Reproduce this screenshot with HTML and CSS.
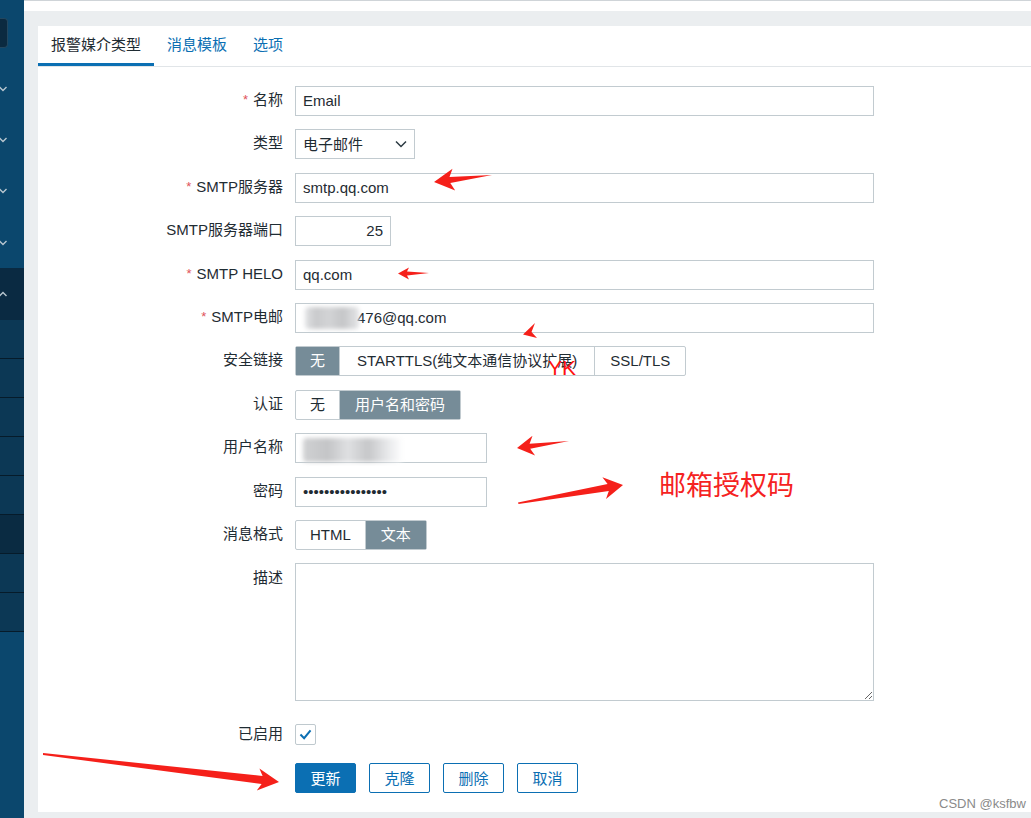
FILE: index.html
```html
<!DOCTYPE html>
<html lang="zh-CN">
<head>
    <meta charset="UTF-8">
    <title>报警媒介类型</title>
    <link rel="stylesheet" href="styles.css">
</head>
<body>
    <div class="layout">
        <nav class="sidebar">
            <div class="sb-top"><span class="sb-btn"></span></div>
            <div class="sb-item"><svg class="chev" viewBox="0 0 8 6"><path d="M0.5 1 L4 4.5 L7.5 1"/></svg></div>
            <div class="sb-item"><svg class="chev" viewBox="0 0 8 6"><path d="M0.5 1 L4 4.5 L7.5 1"/></svg></div>
            <div class="sb-item"><svg class="chev" viewBox="0 0 8 6"><path d="M0.5 1 L4 4.5 L7.5 1"/></svg></div>
            <div class="sb-item"><svg class="chev" viewBox="0 0 8 6"><path d="M0.5 1 L4 4.5 L7.5 1"/></svg></div>
            <div class="sb-open"><svg class="chev" viewBox="0 0 8 6"><path d="M0.5 5 L4 1.5 L7.5 5"/></svg></div>
            <ul class="sb-sub">
                <li></li>
                <li></li>
                <li></li>
                <li></li>
                <li></li>
                <li class="selected"></li>
                <li></li>
                <li></li>
            </ul>
        </nav>

        <main class="main">
            <div class="topbar"></div>
            <section class="panel">
                <div class="tabs">
                    <a class="tab active">报警媒介类型</a>
                    <a class="tab">消息模板</a>
                    <a class="tab">选项</a>
                </div>

                <form class="form">
                    <div class="row">
                        <label class="label"><span class="req">*</span>名称</label>
                        <input class="input wide" type="text" value="Email">
                    </div>
                    <div class="row">
                        <label class="label">类型</label>
                        <div class="select">
                            <span>电子邮件</span>
                            <svg class="select-arrow" viewBox="0 0 12 8"><path d="M1 1.5 L6 6.5 L11 1.5"/></svg>
                        </div>
                    </div>
                    <div class="row">
                        <label class="label"><span class="req">*</span>SMTP服务器</label>
                        <input class="input wide" type="text" value="smtp.qq.com">
                    </div>
                    <div class="row">
                        <label class="label">SMTP服务器端口</label>
                        <input class="input port" type="text" value="25">
                    </div>
                    <div class="row">
                        <label class="label"><span class="req">*</span>SMTP HELO</label>
                        <input class="input wide" type="text" value="qq.com">
                    </div>
                    <div class="row">
                        <label class="label"><span class="req">*</span>SMTP电邮</label>
                        <div class="masked wide">
                            <input class="input wide email" type="text" value="476@qq.com">
                            <span class="blur blur-email"></span>
                        </div>
                    </div>
                    <div class="row">
                        <label class="label">安全链接</label>
                        <div class="segment">
                            <span class="seg on">无</span>
                            <span class="seg seg-long">STARTTLS(纯文本通信协议扩展)</span>
                            <span class="seg">SSL/TLS</span>
                        </div>
                    </div>
                    <div class="row">
                        <label class="label">认证</label>
                        <div class="segment">
                            <span class="seg">无</span>
                            <span class="seg on">用户名和密码</span>
                        </div>
                    </div>
                    <div class="row">
                        <label class="label">用户名称</label>
                        <div class="masked short">
                            <input class="input short" type="text" value="">
                            <span class="blur blur-user"></span>
                        </div>
                    </div>
                    <div class="row">
                        <label class="label">密码</label>
                        <input class="input short" type="text" value="••••••••••••••••">
                    </div>
                    <div class="row">
                        <label class="label">消息格式</label>
                        <div class="segment">
                            <span class="seg">HTML</span>
                            <span class="seg on">文本</span>
                        </div>
                    </div>
                    <div class="row row-top">
                        <label class="label">描述</label>
                        <textarea class="textarea wide"></textarea>
                    </div>
                    <div class="row row-check">
                        <label class="label">已启用</label>
                        <span class="checkbox">
                            <svg viewBox="0 0 14 12"><path d="M1.5 6 L5.5 10 L12.5 1.5"/></svg>
                        </span>
                    </div>
                    <div class="row">
                        <span class="label"></span>
                        <div class="buttons">
                            <button type="button" class="btn primary">更新</button>
                            <button type="button" class="btn">克隆</button>
                            <button type="button" class="btn">删除</button>
                            <button type="button" class="btn">取消</button>
                        </div>
                    </div>
                </form>
            </section>
        </main>
    </div>

    <!-- red annotations drawn on top of the screenshot -->
    <svg class="marks" viewBox="0 0 1031 818">
        <polygon points="492,175 449.5,177.1 452.5,168.7 434,182 455.2,190.5 450.3,183.1"/>
        <polygon points="429,273 407,271.5 409,267.5 398,273.5 409,279.5 407,275.5"/>
        <polygon points="535,323 523,334.5 537,338 531.5,332"/>
        <polygon points="569,441 529.6,443.8 532.5,435.8 517,448 535.1,455.6 530.2,448.8"/>
        <polygon points="518,502.5 607.6,484 602.4,477.2 623,485 606,499 608.8,491 518.5,504"/>
        <polygon points="43,753 262.6,776 259.4,768.6 279,782 256.8,790.4 261.6,784 43,755"/>
    </svg>
    <div class="note">邮箱授权码</div>
    <div class="yk">YK</div>
    <div class="watermark">CSDN @ksfbw</div>
</body>
</html>
```

FILE: styles.css
```css
body {
    margin: 0;
    width: 1031px;
    height: 818px;
    overflow: hidden;
    position: relative;
    font-family: "Liberation Sans", "Noto Sans CJK SC", sans-serif;
    font-size: 15px;
    color: #1f2c33;
    background-color: #ebeef0;
}
.layout {
    display: flex;
    height: 818px;
}

/* sidebar */
.sidebar {
    width: 24px;
    flex-shrink: 0;
    background-color: #0b476d;
    display: flex;
    flex-direction: column;
}
.sb-top {
    height: 63px;
    padding-top: 18px;
    box-sizing: border-box;
}
.sb-btn {
    display: block;
    width: 8px;
    height: 30px;
    background-color: #0b2a40;
    border: 1px solid #23475f;
    border-left: none;
    border-radius: 0 4px 4px 0;
    box-sizing: border-box;
}
.sb-item {
    height: 51.3px;
    display: flex;
    align-items: center;
}
.chev {
    width: 8px;
    height: 6px;
    margin-left: -1px;
    fill: none;
    stroke: #b9c6cf;
    stroke-width: 1.4;
}
.sb-open {
    height: 52px;
    background-color: #0a2a42;
    display: flex;
    align-items: center;
}
.sb-sub {
    list-style: none;
    margin: 0;
    padding: 0;
}
.sb-sub li {
    height: 38px;
    background-color: #0c3855;
    border-bottom: 1px solid #061b2a;
}
.sb-sub li.selected {
    background-color: #0a2b42;
}

/* main area */
.main {
    flex: 1;
    display: flex;
    flex-direction: column;
}
.topbar {
    height: 11px;
    background-color: #fff;
    border-top: 1px solid #cfd4d8;
    box-sizing: border-box;
    margin-bottom: 15px;
}
.panel {
    margin-left: 14px;
    height: 786px;
    background-color: #fff;
}

.tabs {
    display: flex;
    height: 40px;
    border-bottom: 1px solid #e1e5e8;
}
.tab {
    padding: 0 13px;
    line-height: 37px;
    color: #0b6fb3;
    border-bottom: 3px solid transparent;
}
.tab.active {
    color: #1f2c33;
    border-bottom-color: #0b6fb3;
}

/* form */
.form {
    padding-top: 19px;
}
.row {
    display: flex;
    align-items: center;
    gap: 12px;
    margin-bottom: 13.4px;
}
.label {
    width: 245px;
    flex-shrink: 0;
    text-align: right;
    line-height: 18px;
    padding-bottom: 2px;
}
.req {
    color: #e0525a;
    font-size: 13px;
    margin-right: 5px;
    vertical-align: 1px;
}
.input {
    height: 30px;
    box-sizing: border-box;
    border: 1px solid #c2cbd0;
    padding: 0 7px 1px;
    font: inherit;
    color: #1f2c33;
    background-color: #fff;
    outline: none;
}
.wide {
    width: 579px;
}
.short {
    width: 192px;
}
.port {
    width: 96px;
    text-align: right;
}
.email {
    padding-left: 61px;
}
.masked {
    position: relative;
    height: 30px;
}
.blur {
    position: absolute;
    filter: blur(2px);
    border-radius: 4px;
}
.blur-email {
    left: 10px;
    top: 4px;
    width: 54px;
    height: 22px;
    background: linear-gradient(90deg, #e2e3e5 0%, #c9cacc 20%, #d3d4d6 45%, #c5c6c8 70%, #e4e5e7 100%);
}
.blur-user {
    left: 8px;
    top: 5px;
    width: 100px;
    height: 24px;
    background: linear-gradient(90deg, #d0d1d3 0%, #c4c5c7 25%, #dfe0e2 45%, #c6c7c9 65%, #e8e9eb 85%, #fff 100%);
}

.select {
    width: 120px;
    height: 30px;
    box-sizing: border-box;
    border: 1px solid #c2cbd0;
    padding: 0 7px 1px;
    display: flex;
    align-items: center;
    justify-content: space-between;
}
.select-arrow {
    width: 12px;
    height: 8px;
    fill: none;
    stroke: #2b3a42;
    stroke-width: 1.5;
}

.segment {
    display: flex;
    height: 30px;
    box-sizing: border-box;
    border: 1px solid #c2cbd0;
    border-radius: 2px;
}
.seg {
    padding: 0 15px;
    line-height: 27px;
    border-left: 1px solid #c2cbd0;
    white-space: nowrap;
}
.seg:first-child {
    padding: 0 14px;
    border-left: none;
}
.seg.seg-long {
    padding: 0 17px;
}
.seg.on {
    background-color: #768c98;
    color: #fff;
}

.row-top {
    align-items: flex-start;
    margin-bottom: 23px;
}
.row-top .label {
    padding-top: 6px;
}
.textarea {
    height: 138px;
    box-sizing: border-box;
    border: 1px solid #c2cbd0;
    resize: both;
    font: inherit;
    outline: none;
}
.row-check {
    margin-bottom: 18px;
}
.checkbox {
    width: 21px;
    height: 21px;
    box-sizing: border-box;
    border: 1px solid #bfc9ce;
    border-radius: 2px;
    display: flex;
    align-items: center;
    justify-content: center;
}
.checkbox svg {
    width: 13px;
    height: 11px;
    fill: none;
    stroke: #0b6fb3;
    stroke-width: 2.2;
}

.buttons {
    display: flex;
    gap: 13px;
}
.btn {
    height: 30px;
    width: 61px;
    font: inherit;
    color: #0b6fb3;
    background-color: #fff;
    border: 1px solid #0b6fb3;
    border-radius: 2px;
    padding: 0 0 2px;
    cursor: pointer;
}
.btn.primary {
    background-color: #0b6fb3;
    color: #fff;
}

/* annotations */
.marks {
    position: absolute;
    left: 0;
    top: 0;
    width: 1031px;
    height: 818px;
    fill: #f5201a;
    pointer-events: none;
}
.note {
    position: absolute;
    left: 659px;
    top: 464px;
    font-size: 27px;
    color: #f52222;
    font-family: "Noto Sans CJK SC", sans-serif;
}
.yk {
    position: absolute;
    left: 548px;
    top: 356px;
    font-size: 21px;
    color: #ff1010;
    font-family: "Liberation Sans", sans-serif;
}
.watermark {
    position: absolute;
    left: 939px;
    top: 796px;
    font-size: 13px;
    color: #8a8a8a;
}
```
